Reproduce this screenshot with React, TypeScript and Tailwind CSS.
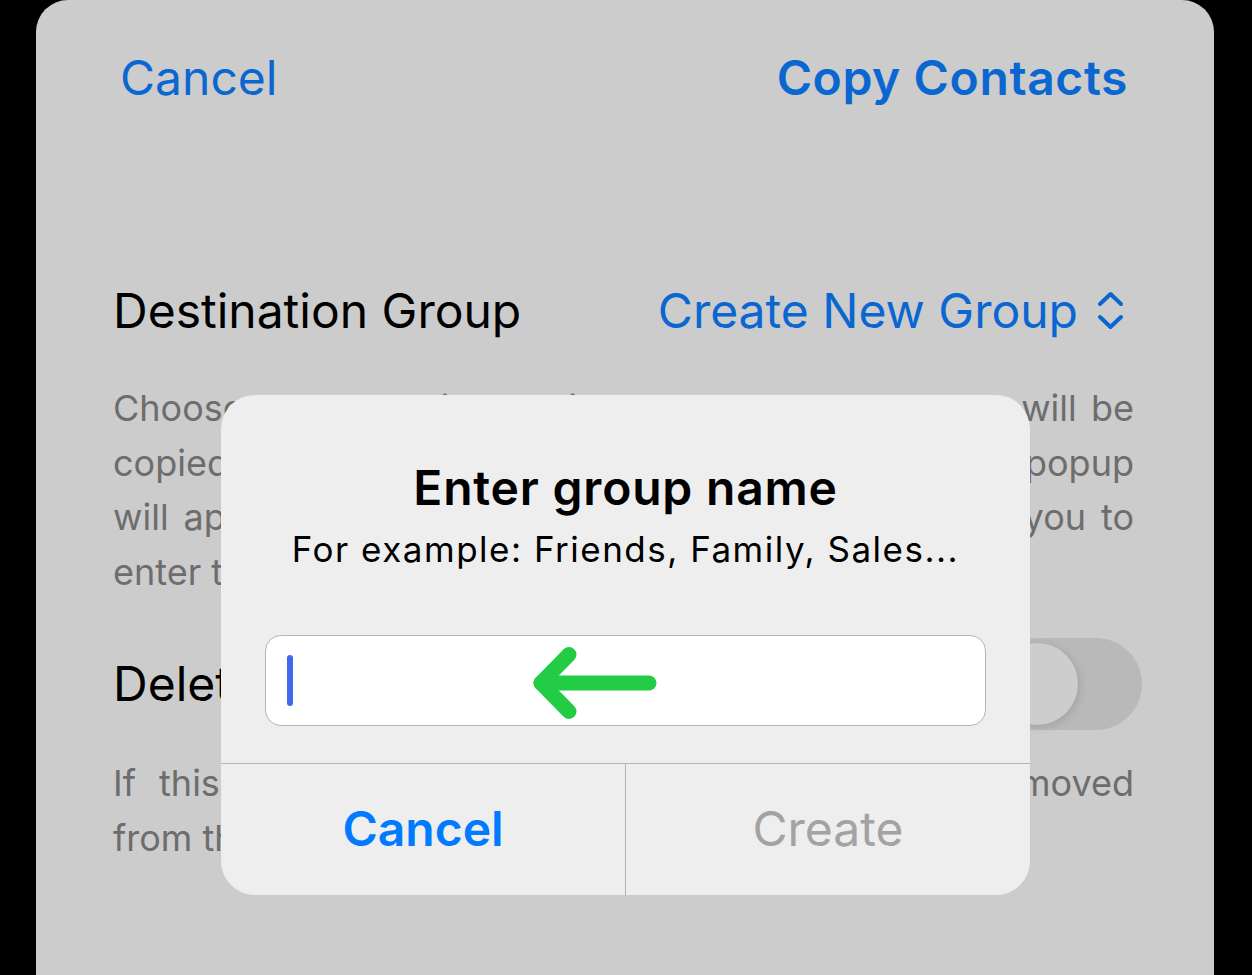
import React from 'react';

const font = { fontFamily: 'Inter, "Noto Sans", sans-serif' };

function UpDown() {
  return (
    <svg width="30" height="44" viewBox="0 0 30 44" fill="none" stroke="currentColor" strokeWidth="4" strokeLinecap="round" strokeLinejoin="round">
      <polyline points="4,15 14.5,5 25,15" />
      <polyline points="4,28 14.5,38 25,28" />
    </svg>
  );
}

function Line({ children, last }: { children: React.ReactNode; last?: boolean }) {
  return <div className={last ? 'text-left' : 'text-justify [text-align-last:justify]'}>{children}</div>;
}

export default function App() {
  return (
    <div className="w-[1252px] h-[975px] bg-black overflow-hidden relative" style={font}>
      <div className="ml-[36px] w-[1178px] h-full bg-[#cccccc] rounded-t-[32px]">
        <div className="flex justify-between items-center pl-[84px] pr-[86px] pt-[48px] h-[108px] text-[48px] text-[#0a66d0] leading-none">
          <span>Cancel</span>
          <span className="font-semibold tracking-[0.6px]">Copy Contacts</span>
        </div>

        <div className="pl-[77px]">
          <div className="flex justify-between items-center mt-[176px] h-[54px] pr-[88px] text-[48px] leading-none">
            <span className="text-black">Destination Group</span>
            <span className="flex items-center gap-[18px] text-[#0a66d0]">
              Create New Group
              <UpDown />
            </span>
          </div>

          <div className="mt-[43px] pr-[80px] text-[36px] leading-[54.5px] text-[#6d6d6d]">
            <Line>Choose the group into which the selected contacts will be</Line>
            <Line>copied. If Create New Group is selected, a popup</Line>
            <Line>will appear after you tap on Copy Contacts, asking you to</Line>
            <Line last>enter the name of the new group.</Line>
          </div>

          <div className="flex justify-between items-center mt-[39px] h-[92px] pr-[72px]">
            <span className="text-[48px] leading-none text-black">Delete from Source Group</span>
            <div className="w-[151px] h-[92px] rounded-full bg-[#b9b9b9] p-[5px] flex items-center">
              <div className="w-[82px] h-[82px] rounded-full bg-[#cdcdcd] shadow-[2px_2px_8px_rgba(0,0,0,0.12)]" />
            </div>
          </div>

          <div className="mt-[26px] pr-[80px] text-[36px] leading-[54.5px] text-[#6d6d6d]">
            <Line>If this option is enabled, the contacts will be removed</Line>
            <Line last>from the source group after copying.</Line>
          </div>
        </div>
      </div>

      <div className="absolute left-[221px] top-[395px] w-[809px] h-[500px] rounded-[34px] bg-[#eeeeee] flex flex-col overflow-hidden">
        <div className="pt-[66px] text-center">
          <div className="text-[48px] tracking-[0.8px] leading-[53px] font-semibold text-black">Enter group name</div>
          <div className="mt-[15px] text-[35px] tracking-[1.5px] leading-[41px] text-black">For example: Friends, Family, Sales...</div>
        </div>

        <div className="mx-[44px] mt-[65px] h-[91px] rounded-[16px] border border-[#b5b5b5] bg-white relative flex items-center pl-[21px]">
          <div className="w-[6px] h-[51px] rounded-full bg-[#4169ef]" />
          <svg className="absolute left-[267px] top-[10px]" width="124" height="74" viewBox="0 0 124 74" fill="none" stroke="#22cc44" strokeWidth="15" strokeLinecap="round" strokeLinejoin="round">
            <polyline points="36,8.5 8,37 36,65.5" />
            <line x1="8" y1="37" x2="116" y2="37" />
          </svg>
        </div>

        <div className="mt-[37px] border-t border-[#b3b3b3] flex flex-1">
          <div className="flex-1 flex items-center justify-center text-[48px] font-semibold text-[#007aff] leading-none pb-[2px]">
            Cancel
          </div>
          <div className="w-px bg-[#b3b3b3]" />
          <div className="flex-1 flex items-center justify-center text-[48px] text-[#a3a3a3] leading-none pb-[2px]">
            Create
          </div>
        </div>
      </div>
    </div>
  );
}
